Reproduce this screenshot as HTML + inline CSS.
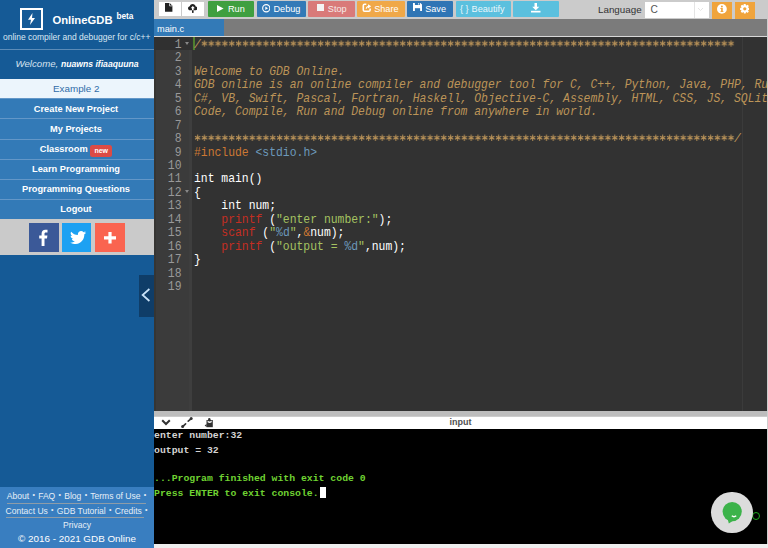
<!DOCTYPE html>
<html><head><meta charset="utf-8">
<style>
*{margin:0;padding:0;box-sizing:border-box}
html,body{width:768px;height:548px;overflow:hidden;background:#ccc;font-family:"Liberation Sans",sans-serif}
.a{position:absolute}
#side{left:0;top:0;width:154px;height:548px;background:#155a96}
.row{position:absolute;left:0;width:154px;height:20.1px;background:#337ab7;border-top:1px solid #6397c8;color:#fff;font-weight:bold;font-size:9.25px;text-align:center;line-height:19px;padding-right:2px}
.btn{position:absolute;top:1.1px;height:15.7px;border-radius:1px;color:#fff;font-size:9.15px;line-height:15.7px;white-space:nowrap}
.btn span{position:absolute;top:.7px}
#ed{left:154px;top:37px;width:613px;height:374px;background:#323232;overflow:hidden}
#gut{left:0;top:0;width:38px;height:374px;background:#3b3b3b}
.ln{position:absolute;left:0;width:38px;height:13.47px;text-align:right;padding-right:10.5px;color:#999;font-family:"Liberation Mono",monospace;font-size:11.4px;line-height:13.47px;transform:scaleY(1.09);transform-origin:0 6.5px;margin-top:1.8px}
.cl{position:absolute;left:40px;height:13.47px;white-space:pre;color:#fff;font-family:"Liberation Mono",monospace;font-size:11.4px;line-height:13.47px;transform:scaleY(1.09);transform-origin:0 6.5px;margin-top:1.8px}
.cm{color:#BC9458;font-style:italic}
.kw{color:#CC7833}
.st{color:#A5C261}
.fn{color:#C42E22}
.nu{color:#6C99BB}
#con{left:154px;top:429px;width:613px;height:115px;background:#000;overflow:hidden}
.co{position:absolute;left:0;white-space:pre;font-family:"Liberation Mono",monospace;font-weight:bold;font-size:9.8px;line-height:14.2px;color:#d4d4d4}
.bu{font-size:7px;vertical-align:1.8px;margin:0 .9px}
.foot{position:absolute;left:0;width:154px;text-align:center;color:#e6eef7;font-size:8.55px;white-space:nowrap}
</style></head><body>
<!-- toolbar bg -->
<div class="a" style="left:154px;top:0;width:614px;height:19px;background:#cbcbcb"></div>
<!-- white buttons -->
<div class="a" style="left:159px;top:1.7px;width:21.5px;height:14px;background:#fff"></div>
<div class="a" style="left:181.8px;top:1.7px;width:22px;height:14px;background:#fff"></div>
<svg class="a" style="left:165px;top:3.3px" width="7.5" height="8.8" viewBox="0 0 7.5 8.8"><path d="M0 0H4.7L7.4 2.7V8.8H0Z" fill="#222"/><path d="M4.5 0.2V2.9H7.3" fill="none" stroke="#fff" stroke-width=".7"/></svg>
<svg class="a" style="left:187.8px;top:3.9px" width="9.6" height="8.9" viewBox="0 0 9.6 8.9"><path d="M2.2 6.3C0.9 6.3 0 5.4 0 4.2 0 3.1 .8 2.3 1.8 2.2 2.2 .9 3.3 0 4.7 0 6.2 0 7.4 1 7.7 2.4 8.8 2.6 9.6 3.4 9.6 4.4 9.6 5.5 8.8 6.3 7.6 6.3Z" fill="#222"/><path d="M4.8 1.9L2.7 4.3H4V6.3H5.6V4.3H6.9Z" fill="#fff"/><path d="M4 6.3H5.6V8.9H4Z" fill="#222"/></svg>
<!-- Run -->
<div class="btn" style="left:208px;width:46px;background:#3f9f40">
 <svg class="a" style="left:9.3px;top:3.9px" width="7" height="7" viewBox="0 0 7 7"><path d="M0 0L6.6 3.5 0 7Z" fill="#fff"/></svg>
 <span style="left:20px">Run</span></div>
<!-- Debug -->
<div class="btn" style="left:257px;width:49px;background:#337ab7">
 <svg class="a" style="left:4.7px;top:3.4px" width="8.5" height="8.5" viewBox="0 0 8.5 8.5"><circle cx="4.25" cy="4.25" r="3.6" fill="none" stroke="#fff" stroke-width="1.1"/><path d="M3.3 2.5L6 4.25 3.3 6Z" fill="#fff"/></svg>
 <span style="left:16.5px">Debug</span></div>
<!-- Stop -->
<div class="btn" style="left:308.3px;width:46.3px;background:#d97a79">
 <div class="a" style="left:9px;top:3.3px;width:7px;height:6.5px;background:#f4f4f4"></div>
 <span style="left:19.5px;color:#f6eaea">Stop</span></div>
<!-- Share -->
<div class="btn" style="left:357.2px;width:48px;background:#f0a848">
 <svg class="a" style="left:4.9px;top:2.4px" width="10" height="10" viewBox="0 0 10 10"><path d="M4.3 1.3H2.6Q1.3 1.3 1.3 2.6V7Q1.3 8.3 2.6 8.3H6.8Q8.1 8.3 8.1 7V5.6" fill="none" stroke="#fff" stroke-width="1.6"/><path d="M4.2 5.6Q4.6 3.6 6.4 3.3" fill="none" stroke="#fff" stroke-width="1.3"/><path d="M6 1.2L9.2 3.3 6 5.4Z" fill="#fff"/></svg>
 <span style="left:17px">Share</span></div>
<!-- Save -->
<div class="btn" style="left:406.6px;width:46.5px;background:#2f75b5">
 <svg class="a" style="left:6.3px;top:2px" width="9" height="8.2" viewBox="0 0 9 8.2"><path d="M0 0H7.4L9 1.6V8.2H0Z" fill="#fff"/><path d="M1.9 0H6.9V2H1.9Z" fill="#2f75b5"/><path d="M5.1 .3H6.1V1.6H5.1Z" fill="#fff"/><path d="M1.9 5.2H7.1V8.2H1.9Z" fill="#2f75b5"/></svg>
 <span style="left:18.6px">Save</span></div>
<!-- Beautify -->
<div class="btn" style="left:455.6px;width:55.3px;background:#5bc0de">
 <span style="left:4.3px;color:#eaf7fb">{ }</span>
 <span style="left:16px;color:#eaf7fb">Beautify</span></div>
<!-- Download -->
<div class="btn" style="left:513px;width:46px;background:#5bc0de">
 <svg class="a" style="left:18px;top:2.2px" width="9.5" height="9.5" viewBox="0 0 9.5 9.5"><path d="M3.5 0H6V3.8H8.3L4.75 7.3 1.2 3.8H3.5Z" fill="#fff"/><path d="M0 7.8H9.5V9.5H0Z" fill="#fff"/></svg>
</div>
<!-- Language -->
<div class="a" style="left:598px;top:3.7px;font-size:9.8px;color:#333;line-height:12px">Language</div>
<div class="a" style="left:645.3px;top:1.7px;width:63.5px;height:16.2px;background:#fff"></div>
<div class="a" style="left:694px;top:1.7px;width:1px;height:16.2px;background:#e4e4e4"></div>
<div class="a" style="left:650.5px;top:3.8px;font-size:10.2px;color:#555;line-height:12px">C</div>
<svg class="a" style="left:698px;top:8px" width="5" height="3" viewBox="0 0 5 3"><path d="M0 0L2.5 2.5 5 0" fill="none" stroke="#ddd" stroke-width=".8"/></svg>
<div class="a" style="left:711.8px;top:2px;width:19.8px;height:16.8px;background:#f0a43c"></div>
<svg class="a" style="left:716.9px;top:4.4px" width="9.8" height="9.8" viewBox="0 0 10 10"><circle cx="5" cy="5" r="5" fill="#fff"/><circle cx="5" cy="2.5" r="1" fill="#f0a43c"/><path d="M3.5 4.1H5.9V7.3H6.6V8.2H3.5V7.3H4.2V5H3.5Z" fill="#f0a43c"/></svg>
<div class="a" style="left:735px;top:2px;width:20px;height:16.8px;background:#f0a43c"></div>
<svg class="a" style="left:739.8px;top:4.4px" width="9.6" height="9.6" viewBox="-5 -5 10 10"><g fill="#fff"><circle r="3.7"/><g id="t"><rect x="-1.15" y="-5" width="2.3" height="10" rx=".5"/></g><rect x="-1.15" y="-5" width="2.3" height="10" rx=".5" transform="rotate(45)"/><rect x="-1.15" y="-5" width="2.3" height="10" rx=".5" transform="rotate(90)"/><rect x="-1.15" y="-5" width="2.3" height="10" rx=".5" transform="rotate(135)"/></g><circle r="1.7" fill="#f0a43c"/></svg>

<!-- tab bar -->
<div class="a" style="left:154px;top:18.6px;width:614px;height:17.2px;background:#7b7b7b"></div>
<div class="a" style="left:154px;top:18.6px;width:70px;height:17.2px;background:#337ab7"></div>
<div class="a" style="left:157px;top:22.6px;font-size:9.2px;color:#fff;line-height:12px">main.c</div>
<div class="a" style="left:154px;top:35.8px;width:614px;height:1.3px;background:#d8d8d8"></div>

<!-- editor -->
<div id="ed" class="a">
 <div id="gut" class="a"></div>
 <div class="a" style="left:0;top:13.47px;width:2px;height:361px;background:#363533"></div>
 <div class="a" style="left:35px;top:13.47px;width:3px;height:361px;background:#3e3e3e"></div>
 <div class="a" style="left:0;top:0;width:38px;height:13.47px;background:#303030"></div>
 <div class="a" style="left:588px;top:0;width:1px;height:374px;background:#3b3b3b"></div>
 <div class="a" style="left:39.4px;top:0;width:1.6px;height:13.47px;background:#4f7f2e"></div>
 <div class="ln" style="top:0">1</div>
 <div class="ln" style="top:13.47px">2</div>
 <div class="ln" style="top:26.94px">3</div>
 <div class="ln" style="top:40.41px">4</div>
 <div class="ln" style="top:53.88px">5</div>
 <div class="ln" style="top:67.35px">6</div>
 <div class="ln" style="top:80.82px">7</div>
 <div class="ln" style="top:94.29px">8</div>
 <div class="ln" style="top:107.76px">9</div>
 <div class="ln" style="top:121.23px">10</div>
 <div class="ln" style="top:134.7px">11</div>
 <div class="ln" style="top:148.17px">12</div>
 <div class="ln" style="top:161.64px">13</div>
 <div class="ln" style="top:175.11px">14</div>
 <div class="ln" style="top:188.58px">15</div>
 <div class="ln" style="top:202.05px">16</div>
 <div class="ln" style="top:215.52px">17</div>
 <div class="ln" style="top:228.99px">18</div>
 <div class="ln" style="top:242.46px">19</div>
 <svg class="a" style="left:30.5px;top:4.7px" width="4" height="3" viewBox="0 0 4 3"><path d="M0 0H4L2 3Z" fill="#888"/></svg>
 <svg class="a" style="left:30.5px;top:153px" width="4" height="3" viewBox="0 0 4 3"><path d="M0 0H4L2 3Z" fill="#888"/></svg>
 <div class="cl cm" style="top:0">/</div>
 <svg class="a" style="left:40px;top:0" width="560" height="108" viewBox="0 0 560 108"><defs><pattern id="ast" x="0" y="0" width="6.84" height="13.47" patternUnits="userSpaceOnUse"><g stroke="#BC9458" stroke-width="1" fill="none"><path d="M3.6 3.4V9.6M1 5 6.2 8M1 8 6.2 5"/></g></pattern></defs><rect x="6.84" y="0" width="533.52" height="13.47" fill="url(#ast)"/><rect x="0" y="94.29" width="540.36" height="13.47" fill="url(#ast)" transform="translate(0,0)"/></svg>
 <div class="cl cm" style="top:26.94px">Welcome to GDB Online.</div>
 <div class="cl cm" style="top:40.41px">GDB online is an online compiler and debugger tool for C, C++, Python, Java, PHP, Ruby, Perl,</div>
 <div class="cl cm" style="top:53.88px">C#, VB, Swift, Pascal, Fortran, Haskell, Objective-C, Assembly, HTML, CSS, JS, SQLite, Prolog.</div>
 <div class="cl cm" style="top:67.35px">Code, Compile, Run and Debug online from anywhere in world.</div>
 <div class="cl cm" style="top:94.29px">                                                                               /</div>
 <div class="cl" style="top:107.76px"><span class="kw">#include</span> <span class="nu">&lt;stdio.h&gt;</span></div>
 <div class="cl" style="top:134.7px">int main()</div>
 <div class="cl" style="top:148.17px">{</div>
 <div class="cl" style="top:161.64px">    int num;</div>
 <div class="cl" style="top:175.11px">    <span class="fn">printf</span> (<span class="st">"enter number:"</span>);</div>
 <div class="cl" style="top:188.58px">    <span class="fn">scanf</span> (<span class="st">"</span><span class="nu">%d</span><span class="st">"</span>,<span class="kw">&amp;</span>num);</div>
 <div class="cl" style="top:202.05px">    <span class="fn">printf</span> (<span class="st">"output = </span><span class="nu">%d</span><span class="st">"</span>,num);</div>
 <div class="cl" style="top:215.52px">}</div>
</div>
<!-- right border strip -->
<div class="a" style="left:766.8px;top:18.6px;width:1.2px;height:530px;background:#cfcfcf"></div>

<!-- splitter -->
<div class="a" style="left:154px;top:410.5px;width:613px;height:1px;background:#555"></div>
<div class="a" style="left:154px;top:411.3px;width:613px;height:5px;background:#bdbdbd"></div>
<!-- console header -->
<div class="a" style="left:154px;top:416.5px;width:613px;height:12.5px;background:#fff"></div>
<svg class="a" style="left:160.5px;top:419px" width="10" height="7" viewBox="0 0 10 7"><path d="M1.2 1.2L5 5 8.8 1.2" fill="none" stroke="#333" stroke-width="2"/></svg>
<svg class="a" style="left:181px;top:417px" width="12" height="11" viewBox="0 0 12 11"><g fill="none" stroke="#333" stroke-width="1.6" stroke-linecap="round"><path d="M7.2 4.2L10 1.8"/><path d="M4.6 6.8L1.9 9.4"/></g><g fill="#333"><circle cx="10.2" cy="1.6" r="1.5"/><circle cx="1.6" cy="9.5" r="1.5"/></g></svg>
<svg class="a" style="left:204px;top:418px" width="9.5" height="10" viewBox="0 0 9.5 10"><g fill="#333"><path d="M2.5 2H8.8V9.2H2.5Z"/><circle cx="5.3" cy="1.3" r="1.2"/><path d="M0.6 7.5L2.6 6V9Z"/></g><path d="M3.6 2.6Q5.6 4.6 7.7 2.6V4.2Q5.6 5.6 3.6 4.2Z" fill="#fff"/></svg>
<div class="a" style="left:449.4px;top:416.3px;font-size:9px;font-weight:bold;color:#505050;line-height:12px">input</div>

<!-- console -->
<div id="con" class="a">
 <div class="co" style="top:0.3px">enter number:32</div>
 <div class="co" style="top:14.6px">output = 32</div>
 <div class="co" style="top:43.3px;color:#6fd232">...Program finished with exit code 0</div>
 <div class="co" style="top:57.7px;color:#6fd232">Press ENTER to exit console.</div>
 <div class="a" style="left:165.5px;top:57.6px;width:6px;height:11.5px;background:#fff"></div>
 <!-- chat bubble -->
 <div class="a" style="left:598px;top:82.6px;width:8px;height:8px;border-radius:50%;border:1.7px solid #1faa1f"></div>
 <div class="a" style="left:557.3px;top:62.5px;width:41.8px;height:41.8px;border-radius:50%;background:#dcdcdc"></div>
 <svg class="a" style="left:567px;top:72px" width="24" height="24" viewBox="0 0 24 24"><circle cx="11.2" cy="10.6" r="9.6" fill="#3cb34a"/><path d="M6.5 17L7.8 22.6 12.5 19.5Z" fill="#3cb34a"/><path d="M10.8 14.8Q13 16.6 15.2 14.8" fill="none" stroke="#fff" stroke-width="1.4"/></svg>
</div>
<div class="a" style="left:154px;top:544px;width:614px;height:4px;background:#eee"></div>

<!-- sidebar -->
<div id="side" class="a">
 <div class="a" style="left:20px;top:7.9px;width:23px;height:21.9px;border:2.3px solid #fff"></div>
 <svg class="a" style="left:27px;top:12.6px" width="9" height="12" viewBox="0 0 9 12"><path d="M5.5 0L1 6.8H4L3 12 8 5H5Z" fill="#fff"/></svg>
 <div class="a" style="left:52.5px;top:13.6px;font-size:11.25px;font-weight:bold;color:#fff;line-height:13px;white-space:nowrap">OnlineGDB</div>
 <div class="a" style="left:116.4px;top:11.2px;font-size:8.3px;font-weight:bold;color:#fff;line-height:10px">beta</div>
 <div class="a" style="left:3px;top:32px;font-size:8.5px;color:#dce8f3;line-height:10px;white-space:nowrap">online compiler and debugger for c/c++</div>
 <div class="a" style="left:0;top:49.2px;width:154px;height:1px;background:#5c8cb8"></div>
 <div class="a" style="left:15.5px;top:58px;font-size:9.67px;font-style:italic;color:#d5e2ef;line-height:11px;white-space:nowrap">Welcome, <b style="color:#fff;font-size:8.65px">nuawns ifiaaquuna</b></div>
 <div class="a" style="left:0;top:79px;width:154px;height:19px;background:#ecf5fc;color:#2f6ca8;font-size:9.85px;text-align:center;line-height:19px;padding-right:1.5px">Example 2</div>
 <div class="row" style="top:98px;height:20px;padding-top:1.2px">Create New Project</div>
 <div class="row" style="top:118px;height:21px;padding-top:1.2px">My Projects</div>
 <div class="row" style="top:139px;height:20px;padding-top:0.1px">Classroom <span style="display:inline-block;vertical-align:top;margin-top:4.5px;width:22px;height:12.4px;border-radius:2.5px;background:#dc4b45;font-size:7px;line-height:12.4px">new</span></div>
 <div class="row" style="top:159px;height:20px;padding-top:0px">Learn Programming</div>
 <div class="row" style="top:179px;height:20px;padding-top:0px">Programming Questions</div>
 <div class="row" style="top:199px;padding-top:0px;height:19.6px">Logout</div>
 <div class="a" style="left:0;top:218.6px;width:154px;height:36.8px;background:#cacaca"></div>
 <div class="a" style="left:29.2px;top:223px;width:30px;height:28.8px;background:#3b5998"></div>
 <svg class="a" style="left:38px;top:229px" width="10" height="17" viewBox="0 0 10 17"><path d="M6.5 17V9.5H9L9.4 6.6H6.5V4.8C6.5 4 6.8 3.4 7.9 3.4H9.5V0.8C9.2 0.8 8.3 0.7 7.3 0.7 5.1 0.7 3.6 2 3.6 4.5V6.6H1.2V9.5H3.6V17Z" fill="#fff"/></svg>
 <div class="a" style="left:62.3px;top:223px;width:29px;height:28.8px;background:#1da1f2"></div>
 <svg class="a" style="left:69.5px;top:230.8px" width="16" height="13.3" viewBox="0 0 24 20"><path d="M24 2.4c-.9.4-1.8.6-2.8.8 1-.6 1.8-1.6 2.2-2.7-1 .6-2 1-3.1 1.2C19.4.7 18.1.1 16.7.1c-2.7 0-4.9 2.2-4.9 4.9 0 .4 0 .8.1 1.1C7.8 5.9 4.2 4 1.7 1 1.3 1.7 1 2.6 1 3.5c0 1.7.9 3.2 2.2 4.1-.8 0-1.6-.2-2.2-.6v.1c0 2.4 1.7 4.4 3.9 4.8-.4.1-.8.2-1.3.2-.3 0-.6 0-.9-.1.6 2 2.4 3.4 4.6 3.4-1.7 1.3-3.8 2.1-6.1 2.1-.4 0-.8 0-1.2-.1 2.2 1.4 4.8 2.2 7.5 2.2 9.1 0 14-7.5 14-14v-.6c1-.7 1.8-1.6 2.5-2.5z" fill="#fff"/></svg>
 <div class="a" style="left:94.5px;top:223px;width:30px;height:28.8px;background:#fa6450"></div>
 <svg class="a" style="left:103.6px;top:232.3px" width="12" height="11.6" viewBox="0 0 12 11.6"><path d="M4.4 0H7.6V4.2H12V7.4H7.6V11.6H4.4V7.4H0V4.2H4.4Z" fill="#fff"/></svg>
 <!-- toggle -->
 <div class="a" style="left:139.4px;top:275px;width:14.6px;height:41.6px;background:#0f3d68"></div>
 <svg class="a" style="left:140.8px;top:288px" width="10" height="14" viewBox="0 0 10 14"><path d="M8.4 1L1.6 7 8.4 13" fill="none" stroke="#c9e2f8" stroke-width="1.7"/></svg>
 <!-- footer -->
 <div class="a" style="left:0;top:486.8px;width:154px;height:61.2px;background:#397ec0"></div>
 <div class="foot" style="top:490.3px;line-height:10px">About <span class="bu">•</span> FAQ <span class="bu">•</span> Blog <span class="bu">•</span> Terms of Use <span class="bu">•</span></div>
 <div class="a" style="left:7px;top:503px;width:139.3px;height:.8px;background:#8d9ca8"></div>
 <div class="foot" style="top:505.3px;line-height:10px">Contact Us <span class="bu">•</span> GDB Tutorial <span class="bu">•</span> Credits <span class="bu">•</span></div>
 <div class="a" style="left:6px;top:517px;width:138px;height:.8px;background:#8d9ca8"></div>
 <div class="foot" style="top:519.5px;line-height:10px">Privacy</div>
 <div class="foot" style="top:533px;line-height:11px;font-size:9.86px;color:#fff">© 2016 - 2021 GDB Online</div>
</div>
</body></html>
